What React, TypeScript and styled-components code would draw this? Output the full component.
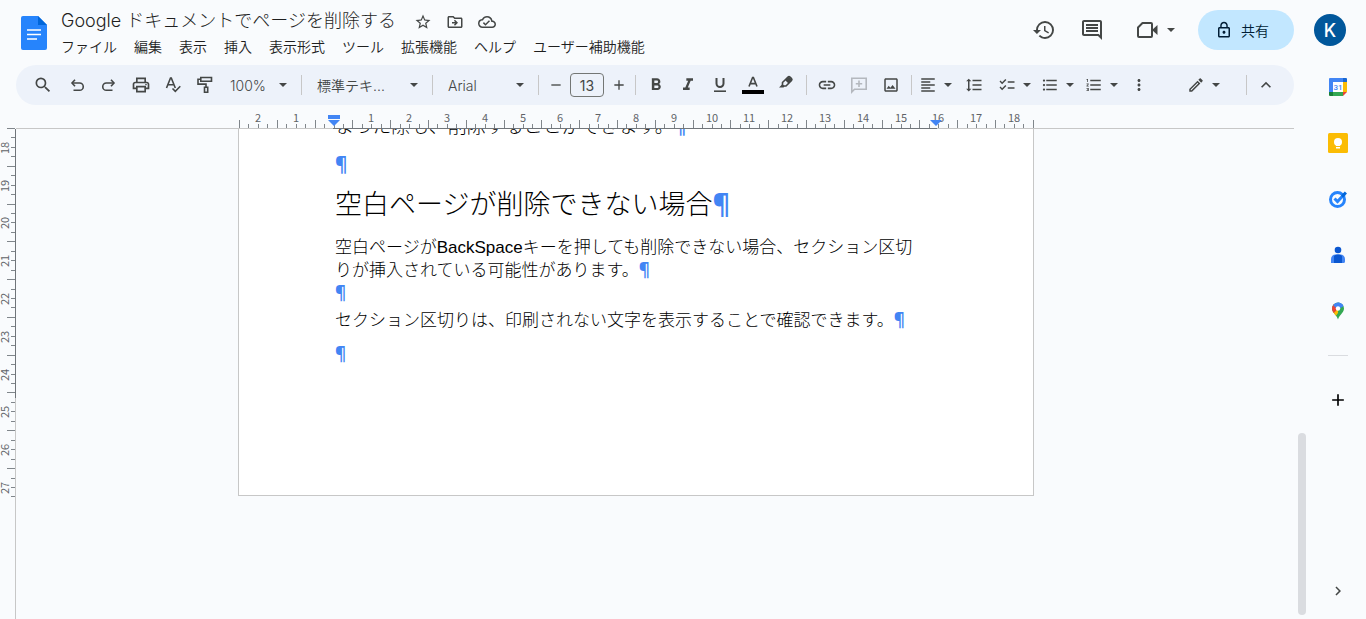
import React from "react";
import styled, { createGlobalStyle, css } from "styled-components";
import {
  MdAdd,
  MdChecklist,
  MdChevronRight,
  MdFormatAlignLeft,
  MdFormatBold,
  MdFormatItalic,
  MdFormatLineSpacing,
  MdFormatListBulleted,
  MdFormatListNumbered,
  MdHistory,
  MdKeyboardArrowUp,
  MdLink,
  MdLockOutline,
  MdMoreVert,
  MdOutlineCloudDone,
  MdOutlineComment,
  MdOutlineDriveFileMove,
  MdOutlineEdit,
  MdOutlineImage,
  MdOutlinePrint,
  MdRemove,
  MdSearch,
  MdStarBorder,
} from "react-icons/md";

const UI_FONT = `Inter, "Noto Sans CJK JP", sans-serif`;
const CJK_FONT = `"Noto Sans CJK JP", sans-serif`;
const DOC_FONT = `Arial, "Noto Sans CJK JP", sans-serif`;

const GlobalStyle = createGlobalStyle`
  *, *::before, *::after { box-sizing: border-box; }
  body {
    margin: 0;
    background: #f9fbfd;
    color: #1f1f1f;
    font-family: ${UI_FONT};
    font-weight: 300;
  }
  button, select, input {
    font: inherit;
    color: inherit;
    border: 0;
    margin: 0;
    padding: 0;
    background: none;
  }
  button { cursor: pointer; }
`;

const Shell = styled.div`
  display: flex;
  flex-direction: column;
  height: 100vh;
  overflow: hidden;
`;

/* ---------- header ---------- */

const Header = styled.header`
  display: flex;
  flex: none;
  height: 65px;
  padding: 0 20px 0 21px;
`;

const LogoLink = styled.a`
  display: block;
  height: 34px;
  margin: 16px 14px 0 0;
`;

const TitleBlock = styled.div`
  flex: 1;
  min-width: 0;
  padding-top: 8px;
`;

const TitleRow = styled.div`
  display: flex;
  align-items: center;
  height: 26px;
`;

const DocTitle = styled.h1`
  margin: 0 18px 0 0;
  font-size: 18px;
  line-height: 26px;
  font-weight: inherit;
  white-space: nowrap;
`;

const TitleActions = styled.div`
  display: flex;
  gap: 14px;
  padding-top: 2px;
  color: #444746;
`;

const PlainButton = styled.button`
  display: inline-flex;
  align-items: center;
  justify-content: center;
`;

const MenuBar = styled.nav`
  display: flex;
  gap: 17px;
  height: 24px;
`;

const MenuButton = styled.button`
  font-family: ${CJK_FONT};
  font-size: 14px;
  font-weight: 350;
  line-height: 24px;
  white-space: nowrap;
`;

const HeaderActions = styled.div`
  display: flex;
  align-items: center;
  height: 40px;
  margin-top: 10px;
  color: #444746;
`;

const HeaderIconButton = styled(PlainButton)`
  width: 48px;
  height: 40px;
`;

const MeetButton = styled(PlainButton)`
  width: 80px;
  height: 40px;
  gap: 8px;
  margin-right: 2px;
`;

const ShareButton = styled(PlainButton)`
  width: 96px;
  height: 40px;
  gap: 8px;
  padding-right: 8px;
  border-radius: 20px;
  background: #c2e7ff;
  color: #001d35;
  font-family: ${CJK_FONT};
  font-size: 14px;
  font-weight: 350;
  margin-right: 20px;
`;

const Avatar = styled(PlainButton)`
  width: 32px;
  height: 32px;
  border-radius: 50%;
  background: #01579b;
  color: #fff;
  font-size: 18px;
  font-weight: 500;
`;

/* ---------- body ---------- */

const Body = styled.div`
  display: flex;
  flex: 1;
  min-height: 0;
`;

const Workspace = styled.main`
  display: flex;
  flex-direction: column;
  flex: 1;
  min-width: 0;
`;

const Toolbar = styled.div`
  display: flex;
  align-items: center;
  flex: none;
  gap: 4px;
  height: 40px;
  margin: 0 16px;
  padding: 0 15px 0 11px;
  border-radius: 20px;
  background: #edf2fa;
  color: #444746;
`;

const Tool = styled.button<{ $w?: number }>`
  display: inline-flex;
  flex: none;
  align-items: center;
  justify-content: center;
  gap: 6px;
  width: ${(p) => p.$w ?? 28}px;
  height: 28px;
  &:disabled { color: #b4b8be; }
`;

const Divider = styled.span`
  flex: none;
  width: 1px;
  height: 20px;
  margin: 0 2px;
  background: #c7c7c7;
`;

const Spacer = styled.span`
  flex: 1;
`;

const SelectBox = styled.span<{ $w: number; $pad: number }>`
  display: grid;
  flex: none;
  align-items: center;
  width: ${(p) => p.$w}px;
  height: 28px;
  font-size: 14px;
  font-weight: 350;
  > * { grid-area: 1 / 1; }
  select {
    appearance: none;
    width: 100%;
    height: 28px;
    padding: 0 24px 0 ${(p) => p.$pad}px;
    outline: 0;
  }
  svg {
    justify-self: end;
    margin-right: 7px;
    pointer-events: none;
  }
`;

const SizeInput = styled.input`
  flex: none;
  width: 34px;
  height: 24px;
  border: 1px solid #747775;
  border-radius: 4px;
  font-size: 14px;
  font-weight: 400;
  text-align: center;
`;

/* ---------- editor ---------- */

const RulerRow = styled.div`
  display: flex;
  justify-content: center;
  flex: none;
  height: 24px;
  margin: 0 16px;
  padding-right: 38px;
  border-bottom: 1px solid #c7c7c7;
  svg { flex: none; display: block; overflow: visible; }
`;

const Editor = styled.div`
  display: flex;
  flex: 1;
  min-height: 0;
`;

const VerticalRuler = styled.div`
  flex: none;
  width: 16px;
  border-right: 1px solid #c7c7c7;
  svg { display: block; overflow: visible; }
`;

const Canvas = styled.div`
  display: flex;
  flex: 1;
  justify-content: center;
  align-items: flex-start;
  min-width: 0;
  overflow: hidden;
  padding-right: 42px;
`;

const Page = styled.article`
  flex: none;
  width: 796px;
  padding: 0 96px 129px;
  border: 1px solid #c7c7c7;
  border-top: 0;
  background: #fff;
  color: #000;
  font-family: ${DOC_FONT};
  font-weight: 400;
`;

const paragraph = css`
  margin: 0;
  font-weight: inherit;
  white-space: nowrap;
`;

const Paragraph = styled.p<{ $before?: number; $large?: boolean }>`
  ${paragraph}
  margin-top: ${(p) => p.$before ?? 0}px;
  font-size: ${(p) => (p.$large ? 19 : 17)}px;
  line-height: 23px;
`;

const Heading = styled.h2`
  ${paragraph}
  margin: 11px 0 13px;
  font-size: 27px;
  line-height: 36px;
`;

const Light = styled.span`
  font-family: ${CJK_FONT};
  font-weight: 300;
  line-height: 0;
`;

const Mark = styled.span`
  color: #4285f4;
  font-family: "Noto Sans", sans-serif;
  font-weight: 700;
  line-height: 0;
`;

const ScrollTrack = styled.div`
  display: flex;
  flex: none;
  align-items: flex-end;
  width: 12px;
  padding: 0 4px 4px 0;
`;

const ScrollThumb = styled.div`
  width: 8px;
  height: 182px;
  border-radius: 4px;
  background: #dadce0;
`;

/* ---------- side panel ---------- */

const SidePanel = styled.aside`
  display: flex;
  flex: none;
  flex-direction: column;
  align-items: center;
  width: 56px;
  padding: 2px 0 8px;
`;

const AppList = styled.div`
  display: flex;
  flex-direction: column;
  gap: 16px;
`;

const PanelButton = styled(PlainButton)`
  width: 40px;
  height: 40px;
`;

const PanelRule = styled.hr`
  width: 20px;
  height: 1px;
  margin: 24px 0;
  border: 0;
  background: #dadce0;
`;

/* ---------- drawings ---------- */

const Caret = () => (
  <svg width="10" height="6" viewBox="0 0 10 6" aria-hidden="true">
    <path d="M1 1h8L5 5z" fill="#444746" />
  </svg>
);

const DocsLogo = () => (
  <svg width="26" height="34" viewBox="0 0 26 34" aria-hidden="true">
    <path d="M2 0h15l9 9v23a2 2 0 0 1-2 2H2a2 2 0 0 1-2-2V2a2 2 0 0 1 2-2z" fill="#2684fc" />
    <path d="M17 0l9 9h-9z" fill="#0066da" />
    <path d="M6 14h14M6 18.500h14M6 23h10" stroke="#fff" strokeWidth="1.600" />
  </svg>
);

const stroke = { fill: "none", stroke: "currentColor", strokeWidth: 1.6 };

const UndoIcon = ({ flip }: { flip?: boolean }) => (
  <svg width="18" height="18" viewBox="0 0 18 18" aria-hidden="true">
    <g transform={flip ? "matrix(-1 0 0 1 18 0)" : undefined} {...stroke}>
      <path d="M7 3.800 4 7l3 3.200" />
      <path d="M4.200 7h7.400a3.500 3.500 0 0 1 0 7.300H5.500" />
    </g>
  </svg>
);

const SpellIcon = () => (
  <svg width="18" height="18" viewBox="0 0 18 18" aria-hidden="true" {...stroke}>
    <path d="M2.500 12 6.500 2h.8l4 10M4 8.800h5.800" />
    <path d="m8.500 12.500 2.800 2.800 5-5" />
  </svg>
);

const RollerIcon = () => (
  <svg width="18" height="18" viewBox="0 0 18 18" aria-hidden="true" {...stroke}>
    <path d="M4.800 1.500h10.700v3.700H4.800zM4.800 3.200H2v4.900h8v3" />
    <path d="M8.500 11.200h3.200v5H8.500z" />
  </svg>
);

const UnderlineIcon = () => (
  <svg width="18" height="18" viewBox="0 0 18 18" aria-hidden="true" {...stroke}>
    <path d="M5.500 2v5.500a3.500 3.500 0 0 0 7 0V2" strokeWidth="2" />
    <path d="M3 15.200h12" />
  </svg>
);

const TextColorIcon = () => (
  <svg width="22" height="20" viewBox="0 0 22 20" aria-hidden="true">
    <path d="m7 11.500 3.600-9h.8l3.600 9M8.200 8.600h5.600" {...stroke} />
    <path d="M0 15h22v4H0z" fill="#000" />
  </svg>
);

const HighlighterIcon = () => (
  <svg width="18" height="22" viewBox="0 0 18 22" aria-hidden="true">
    <path d="M5.500 8.500 11 3a1.500 1.500 0 0 1 2 0l1.500 1.500a1.500 1.500 0 0 1 0 2L9 12H5.500z" {...stroke} />
    <path d="m8 6 3.500 3.500 3.500-4L12 2.500zM2 13.500l3.500-3.500 2 2.500-1 1z" fill="currentColor" />
  </svg>
);

const CommentAddIcon = () => (
  <svg width="18" height="18" viewBox="0 0 18 18" aria-hidden="true" {...stroke}>
    <path d="M1.800 16V2.300h14.400v10.900H4.500z" />
    <path d="M9 4.500v6.500M5.800 7.800h6.400" />
  </svg>
);

const MeetIcon = () => (
  <svg width="22" height="18" viewBox="0 0 22 18" aria-hidden="true">
    <path d="M6.500 2H15q1 0 1 1v12q0 1-1 1H3q-1 0-1-1V6.500z" fill="none" stroke="currentColor" strokeWidth="2" strokeLinejoin="round" />
    <path d="m16 9 5.500-5v10z" fill="currentColor" />
  </svg>
);

const CalendarIcon = () => (
  <svg width="20" height="20" viewBox="0 0 20 20" aria-hidden="true">
    <path d="M2 1h13v4H5v10H1V2a1 1 0 0 1 1-1z" fill="#4285f4" />
    <path d="M15 1h3a1 1 0 0 1 1 1v3h-4z" fill="#1967d2" />
    <path d="M15 5h4v10h-4z" fill="#fbbc04" />
    <path d="M5 15h10v4H5z" fill="#34a853" />
    <path d="M1 15h4v4H2a1 1 0 0 1-1-1z" fill="#188038" />
    <path d="M15 15h4l-4 4z" fill="#ea4335" />
    <path d="M5 5h10v10H5z" fill="#fff" />
    <text x="10" y="13" textAnchor="middle" fontFamily="Roboto, sans-serif" fontWeight="500" fontSize="8" fill="#4285f4">31</text>
  </svg>
);

const KeepIcon = () => (
  <svg width="20" height="20" viewBox="0 0 20 20" aria-hidden="true">
    <rect width="20" height="20" rx="1.500" fill="#fbbc04" />
    <circle cx="10" cy="9" r="4" fill="#fff" />
    <path d="M8 11h4v2H8zM8 14h4v1.500H8z" fill="#fff" />
  </svg>
);

const TasksIcon = () => (
  <svg width="20" height="20" viewBox="0 0 20 20" aria-hidden="true">
    <circle cx="9.500" cy="10.500" r="7" fill="none" stroke="#2684fc" strokeWidth="3" />
    <path d="m6.500 9.500 3 3 7-7.500" fill="none" stroke="#2684fc" strokeWidth="3" />
    <path d="m13 6.500 3.800-4 2.200 2-4 4.200z" fill="#0066da" />
  </svg>
);

const ContactsIcon = () => (
  <svg width="20" height="20" viewBox="0 0 20 20" aria-hidden="true">
    <path d="M3 18v-4a4.500 4.500 0 0 1 4.500-4.500h5A4.500 4.500 0 0 1 17 14v2.500q0 1.500-1.500 1.500z" fill="#4285f4" />
    <path d="M6 11Q7 9.500 9 9.500h2q2 0 3 1.500v7H6z" fill="#0b57d0" />
    <circle cx="10" cy="5" r="3.300" fill="#0b57d0" />
  </svg>
);

const MapsIcon = () => (
  <svg width="20" height="20" viewBox="0 0 20 20" aria-hidden="true">
    <clipPath id="pin">
      <path d="M10 1.500a6 6 0 0 1 6 6c0 4-4.500 6-6 11-1.500-5-6-7-6-11a6 6 0 0 1 6-6z" />
    </clipPath>
    <g clipPath="url(#pin)">
      <path d="M0 0h20v20H0z" fill="#34a853" />
      <path d="M4 16V11L10 6v6l-3 4z" fill="#fbbc04" />
      <path d="M0 3h6l4 4.500-5 5.500H0z" fill="#ea4335" />
      <path d="M5 4 8 0h6l2 4-6 5z" fill="#4285f4" />
      <path d="M10 1h8v3l-6 3z" fill="#4285f4" />
    </g>
    <circle cx="10" cy="7.500" r="2.200" fill="#fff" />
  </svg>
);

/* ---------- rulers ---------- */

/* Four ticks per centimetre at 96 dpi. */
const QUARTER = 9.45;
const RULER_TEXT = {
  fontFamily: CJK_FONT,
  fontSize: 11,
  fontWeight: 400,
  fill: "#5f6368",
  textAnchor: "middle" as const,
};

const HorizontalTicks = () => {
  const origin = 95.5;
  const ticks = [];
  for (let k = -10; k <= 74; k++) {
    const x = Math.round(origin + k * QUARTER);
    const tall = Math.abs(k % 4) === 2;
    ticks.push(<rect key={k} x={x} y={tall ? 15 : 19} width="1" height={tall ? 8 : 4} fill="#80868b" />);
    if (k % 4 === 0 && k !== 0) {
      ticks.push(
        <text key={`n${k}`} x={x} y="17" {...RULER_TEXT}>
          {Math.abs(k / 4)}
        </text>
      );
    }
  }
  return (
    <svg width="796" height="24" role="img" aria-label="水平ルーラー">
      {ticks}
      <path d="M95 23h604v1H95z" fill="#70757a" />
      <path d="M90 10h12v4H90zM90 15h12l-6 6zM692 15h12l-6 6z" fill="#4285f4" />
    </svg>
  );
};

const VerticalTicks = () => {
  const ticks = [];
  for (let k = 0; k <= 39; k++) {
    const y = Math.round(k * QUARTER - 0.1) - 1;
    const tall = k % 4 === 0;
    ticks.push(<rect key={k} x={tall ? 7 : 11} y={y} width={tall ? 8 : 4} height="1" fill="#80868b" />);
    if (k % 4 === 2) {
      ticks.push(
        <text key={`n${k}`} transform={`translate(9 ${y + 1}) rotate(-90)`} {...RULER_TEXT}>
          {18 + (k - 2) / 4}
        </text>
      );
    }
  }
  return (
    <svg width="16" height="370" role="img" aria-label="垂直ルーラー">
      {ticks}
      <path d="M15 0h1v269h-1z" fill="#70757a" />
    </svg>
  );
};

const MENUS = ["ファイル", "編集", "表示", "挿入", "表示形式", "ツール", "拡張機能", "ヘルプ", "ユーザー補助機能"];

const SIDE_APPS = [
  { name: "カレンダー", icon: <CalendarIcon /> },
  { name: "Keep", icon: <KeepIcon /> },
  { name: "ToDo リスト", icon: <TasksIcon /> },
  { name: "連絡先", icon: <ContactsIcon /> },
  { name: "マップ", icon: <MapsIcon /> },
];

const ToolSelect = ({ label, value, w, pad }: { label: string; value: string; w: number; pad: number }) => (
  <SelectBox $w={w} $pad={pad}>
    <select aria-label={label} defaultValue={value}>
      <option>{value}</option>
    </select>
    <Caret />
  </SelectBox>
);

export default function App() {
  return (
    <Shell>
      <GlobalStyle />
      <Header>
        <LogoLink href="#" aria-label="ドキュメントのホーム">
          <DocsLogo />
        </LogoLink>
        <TitleBlock>
          <TitleRow>
            <DocTitle>Google ドキュメントでページを削除する</DocTitle>
            <TitleActions>
              <PlainButton aria-label="スター"><MdStarBorder size={18} /></PlainButton>
              <PlainButton aria-label="移動"><MdOutlineDriveFileMove size={18} /></PlainButton>
              <PlainButton aria-label="保存状況"><MdOutlineCloudDone size={18} /></PlainButton>
            </TitleActions>
          </TitleRow>
          <MenuBar>
            {MENUS.map((m) => (
              <MenuButton key={m}>{m}</MenuButton>
            ))}
          </MenuBar>
        </TitleBlock>
        <HeaderActions>
          <HeaderIconButton aria-label="変更履歴"><MdHistory size={24} /></HeaderIconButton>
          <HeaderIconButton aria-label="コメント"><MdOutlineComment size={24} /></HeaderIconButton>
          <MeetButton aria-label="ビデオ通話"><MeetIcon /><Caret /></MeetButton>
          <ShareButton><MdLockOutline size={18} />共有</ShareButton>
          <Avatar aria-label="アカウント">K</Avatar>
        </HeaderActions>
      </Header>

      <Body>
        <Workspace>
          <Toolbar role="toolbar">
            <Tool $w={32} aria-label="検索"><MdSearch size={20} /></Tool>
            <Tool aria-label="元に戻す"><UndoIcon /></Tool>
            <Tool aria-label="やり直し"><UndoIcon flip /></Tool>
            <Tool aria-label="印刷"><MdOutlinePrint size={20} /></Tool>
            <Tool aria-label="スペルチェック"><SpellIcon /></Tool>
            <Tool aria-label="書式を貼り付け"><RollerIcon /></Tool>
            <ToolSelect label="ズーム" value="100%" w={72} pad={7} />
            <Divider />
            <ToolSelect label="スタイル" value="標準テキ..." w={118} pad={9} />
            <Divider />
            <ToolSelect label="フォント" value="Arial" w={93} pad={9} />
            <Divider />
            <Tool $w={21} aria-label="縮小"><MdRemove size={16} /></Tool>
            <SizeInput aria-label="フォントサイズ" defaultValue="13" />
            <Tool $w={21} aria-label="拡大"><MdAdd size={16} /></Tool>
            <Divider />
            <Tool aria-label="太字"><MdFormatBold size={20} /></Tool>
            <Tool aria-label="斜体"><MdFormatItalic size={20} /></Tool>
            <Tool aria-label="下線"><UnderlineIcon /></Tool>
            <Tool $w={30} aria-label="文字の色"><TextColorIcon /></Tool>
            <Tool aria-label="ハイライト"><HighlighterIcon /></Tool>
            <Divider />
            <Tool aria-label="リンク"><MdLink size={20} /></Tool>
            <Tool aria-label="コメントを追加" disabled><CommentAddIcon /></Tool>
            <Tool aria-label="画像"><MdOutlineImage size={18} /></Tool>
            <Divider />
            <Tool $w={36} aria-label="配置"><MdFormatAlignLeft size={18} /><Caret /></Tool>
            <Tool $w={32} aria-label="行間隔"><MdFormatLineSpacing size={18} /></Tool>
            <Tool $w={42} aria-label="チェックリスト"><MdChecklist size={18} /><Caret /></Tool>
            <Tool $w={36} aria-label="箇条書き"><MdFormatListBulleted size={18} /><Caret /></Tool>
            <Tool $w={44} aria-label="番号付きリスト"><MdFormatListNumbered size={18} /><Caret /></Tool>
            <Tool $w={22} aria-label="その他"><MdMoreVert size={18} /></Tool>
            <Spacer />
            <Tool $w={72} aria-label="編集モード"><MdOutlineEdit size={18} /><Caret /></Tool>
            <Divider />
            <Tool $w={26} aria-label="メニューを隠す"><MdKeyboardArrowUp size={20} /></Tool>
          </Toolbar>
          <RulerRow>
            <HorizontalTicks />
          </RulerRow>
          <Editor>
            <VerticalRuler>
              <VerticalTicks />
            </VerticalRuler>
            <Canvas>
              <Page>
                <Paragraph $large $before={-14}>
                  <Light>まった際も、削除することができます。</Light><Mark>¶</Mark>
                </Paragraph>
                <Paragraph $large $before={15}><Mark>¶</Mark></Paragraph>
                <Heading><Light>空白ページが削除できない場合</Light><Mark>¶</Mark></Heading>
                <Paragraph>
                  <Light>空白ページが</Light>BackSpace<Light>キーを押しても削除できない場合、セクション区切</Light>
                  <br />
                  <Light>りが挿入されている可能性があります。</Light><Mark>¶</Mark>
                </Paragraph>
                <Paragraph><Mark>¶</Mark></Paragraph>
                <Paragraph $before={4}>
                  <Light>セクション区切りは、印刷されない文字を表示することで確認できます。</Light><Mark>¶</Mark>
                </Paragraph>
                <Paragraph $before={11}><Mark>¶</Mark></Paragraph>
              </Page>
            </Canvas>
            <ScrollTrack>
              <ScrollThumb />
            </ScrollTrack>
          </Editor>
        </Workspace>
        <SidePanel>
          <AppList>
            {SIDE_APPS.map((a) => (
              <PanelButton key={a.name} aria-label={a.name}>{a.icon}</PanelButton>
            ))}
          </AppList>
          <PanelRule />
          <PanelButton aria-label="アドオンを取得"><MdAdd size={20} color="#000" /></PanelButton>
          <Spacer />
          <PanelButton aria-label="サイドパネルを非表示"><MdChevronRight size={18} color="#444746" /></PanelButton>
        </SidePanel>
      </Body>
    </Shell>
  );
}
